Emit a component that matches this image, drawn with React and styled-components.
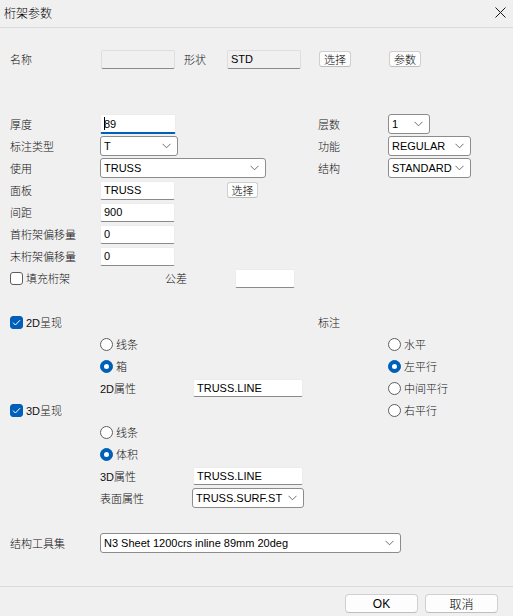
import React from "react";
import styled, { createGlobalStyle } from "styled-components";

const GlobalStyle = createGlobalStyle`
  html, body { margin: 0; padding: 0; background: #f0f0f0; }
  body {
    font-family: "Liberation Sans", "Noto Sans CJK SC", sans-serif;
    font-size: 11px;
    font-weight: 300;
    color: #1a1a1a;
  }
  * { box-sizing: border-box; }
`;

const Window = styled.div`
  width: 513px;
  height: 616px;
  display: flex;
  flex-direction: column;
  background: #f0f0f0;
`;

const TitleBar = styled.div`
  height: 28px;
  flex: none;
  display: flex;
  align-items: center;
  justify-content: space-between;
  padding: 0 7px 2px 4px;
  border-bottom: 1px solid #dadada;
`;

const Title = styled.div`
  font-size: 12px;
  color: #000;
`;

const Body = styled.div`
  flex: 1;
  padding-left: 10px;
`;

const Section = styled.div`
  margin-top: ${(p) => p.$mt || 0}px;
  display: flex;
`;

const Column = styled.div`
  width: ${(p) => (p.$w ? `${p.$w}px` : "auto")};
  display: flex;
  flex-direction: column;
`;

const Row = styled.div`
  height: 22px;
  display: flex;
  align-items: center;
  padding-left: ${(p) => p.$indent || 0}px;
`;

const Label = styled.span`
  width: ${(p) => (p.$w ? `${p.$w}px` : "auto")};
  margin-left: ${(p) => p.$ml || 0}px;
  flex: none;
  white-space: nowrap;
  color: #111;
`;

const TextBox = styled.div`
  position: relative;
  width: ${(p) => p.$w}px;
  height: ${(p) => p.$h || 19}px;
  margin-left: ${(p) => p.$ml || 0}px;
  flex: none;
  display: flex;
  align-items: center;
  padding-left: 3px;
  background: ${(p) => (p.$gray ? "#f0f0f0" : "#ffffff")};
  border: 1px solid ${(p) => (p.$gray ? "#dedede" : "#ececec")};
  border-bottom: ${(p) => (p.$focus ? "2px solid #005fb8" : "1px solid #8a8a8a")};
  border-radius: 2px;
  color: #000;
  white-space: nowrap;
`;

const Caret = styled.span`
  display: inline-block;
  width: 1px;
  height: 13px;
  background: #000;
  margin-right: -1px;
`;

const SelectBox = styled.div`
  width: ${(p) => p.$w}px;
  height: 20px;
  flex: none;
  display: flex;
  align-items: center;
  justify-content: space-between;
  padding: 0 6px 0 3px;
  background: #ffffff;
  border: 1px solid #8c8c8c;
  border-radius: 3px;
  color: #000;
  white-space: nowrap;
`;

const SmallButton = styled.div`
  width: ${(p) => p.$w || 32}px;
  height: 16px;
  margin-left: ${(p) => p.$ml || 0}px;
  flex: none;
  display: flex;
  align-items: center;
  justify-content: center;
  background: #fdfdfd;
  border: 1px solid #cfcfcf;
  border-bottom-color: #bdbdbd;
  border-radius: 3px;
  font-size: 11px;
  color: #000;
`;

const Box = styled.span`
  width: 13px;
  height: 13px;
  flex: none;
  margin-right: 3px;
  border-radius: 3px;
  display: flex;
  align-items: center;
  justify-content: center;
  background: ${(p) => (p.$checked ? "#005fb8" : "#ffffff")};
  border: 1px solid ${(p) => (p.$checked ? "#005fb8" : "#5e5e5e")};
`;

const RadioDot = styled.span`
  width: 13px;
  height: 13px;
  flex: none;
  margin-right: 3px;
  border-radius: 50%;
  display: flex;
  align-items: center;
  justify-content: center;
  background: ${(p) => (p.$checked ? "#005fb8" : "#ffffff")};
  border: 1px solid ${(p) => (p.$checked ? "#005fb8" : "#5e5e5e")};
  &::after {
    content: "";
    display: ${(p) => (p.$checked ? "block" : "none")};
    width: 5px;
    height: 5px;
    border-radius: 50%;
    background: #ffffff;
  }
`;

const Footer = styled.div`
  height: 30px;
  flex: none;
  border-top: 1px solid #dadada;
  display: flex;
  justify-content: flex-end;
  gap: 7px;
  padding: 7px 15px 0 0;
`;

const DialogButton = styled.div`
  width: 73px;
  height: 19px;
  display: flex;
  align-items: center;
  justify-content: center;
  background: #fdfdfd;
  border: 1px solid #d0d0d0;
  border-bottom-color: #bfbfbf;
  border-radius: 4px;
  font-size: 12px;
  color: #000;
`;

const Chevron = () => (
  <svg width="9" height="6" viewBox="0 0 9 6">
    <polyline points="0.5,0.8 4.5,4.8 8.5,0.8" fill="none" stroke="#5f5f5f" strokeWidth="0.9" />
  </svg>
);

const CloseIcon = () => (
  <svg width="11" height="11" viewBox="0 0 11 11">
    <path d="M0.5 0.5 L10.5 10.5 M10.5 0.5 L0.5 10.5" stroke="#1a1a1a" strokeWidth="1" />
  </svg>
);

const CheckMark = () => (
  <svg width="9" height="7" viewBox="0 0 9 7">
    <polyline points="1,3.6 3.4,6 8,1.2" fill="none" stroke="#ffffff" strokeWidth="1" />
  </svg>
);

const Select = ({ w, children }) => (
  <SelectBox $w={w}>
    <span>{children}</span>
    <Chevron />
  </SelectBox>
);

const Check = ({ checked, children }) => (
  <Row>
    <Box $checked={checked}>{checked && <CheckMark />}</Box>
    <Label>{children}</Label>
  </Row>
);

const Radio = ({ checked, indent, children }) => (
  <Row $indent={indent}>
    <RadioDot $checked={checked} />
    <Label>{children}</Label>
  </Row>
);

export default function App() {
  return (
    <Window>
      <GlobalStyle />
      <TitleBar>
        <Title>桁架参数</Title>
        <CloseIcon />
      </TitleBar>
      <Body>
        <Section $mt={20}>
          <Row>
            <Label $w={91}>名称</Label>
            <TextBox $w={74} $gray />
            <Label $w={43} $ml={9}>形状</Label>
            <TextBox $w={74} $gray>STD</TextBox>
            <SmallButton $ml={18}>选择</SmallButton>
            <SmallButton $ml={38}>参数</SmallButton>
          </Row>
        </Section>

        <Section $mt={43}>
          <Column $w={308}>
            <Row>
              <Label $w={90}>厚度</Label>
              <TextBox $w={76} $h={20} $focus><Caret />89</TextBox>
            </Row>
            <Row>
              <Label $w={90}>标注类型</Label>
              <Select w={78}>T</Select>
            </Row>
            <Row>
              <Label $w={90}>使用</Label>
              <Select w={166}>TRUSS</Select>
            </Row>
            <Row>
              <Label $w={90}>面板</Label>
              <TextBox $w={75}>TRUSS</TextBox>
              <SmallButton $ml={52} $w={31}>选择</SmallButton>
            </Row>
            <Row>
              <Label $w={90}>间距</Label>
              <TextBox $w={75}>900</TextBox>
            </Row>
            <Row>
              <Label $w={90}>首桁架偏移量</Label>
              <TextBox $w={75}>0</TextBox>
            </Row>
            <Row>
              <Label $w={90}>末桁架偏移量</Label>
              <TextBox $w={75}>0</TextBox>
            </Row>
            <Row>
              <Box />
              <Label $w={139}>填充桁架</Label>
              <Label $w={70}>公差</Label>
              <TextBox $w={60} />
            </Row>
          </Column>
          <Column>
            <Row>
              <Label $w={70}>层数</Label>
              <Select w={42}>1</Select>
            </Row>
            <Row>
              <Label $w={70}>功能</Label>
              <Select w={83}>REGULAR</Select>
            </Row>
            <Row>
              <Label $w={70}>结构</Label>
              <Select w={83}>STANDARD</Select>
            </Row>
          </Column>
        </Section>

        <Section $mt={22}>
          <Column $w={308}>
            <Check checked>2D呈现</Check>
            <Radio indent={90}>线条</Radio>
            <Radio indent={90} checked>箱</Radio>
            <Row $indent={90}>
              <Label $w={93}>2D属性</Label>
              <TextBox $w={110} $h={18}>TRUSS.LINE</TextBox>
            </Row>
            <Check checked>3D呈现</Check>
            <Radio indent={90}>线条</Radio>
            <Radio indent={90} checked>体积</Radio>
            <Row $indent={90}>
              <Label $w={93}>3D属性</Label>
              <TextBox $w={110} $h={18}>TRUSS.LINE</TextBox>
            </Row>
            <Row $indent={90}>
              <Label $w={92}>表面属性</Label>
              <Select w={112}>TRUSS.SURF.ST</Select>
            </Row>
          </Column>
          <Column>
            <Row>
              <Label>标注</Label>
            </Row>
            <Radio indent={70}>水平</Radio>
            <Radio indent={70} checked>左平行</Radio>
            <Radio indent={70}>中间平行</Radio>
            <Radio indent={70}>右平行</Radio>
          </Column>
        </Section>

        <Section $mt={23}>
          <Row>
            <Label $w={90}>结构工具集</Label>
            <Select w={301}>N3 Sheet 1200crs inline 89mm 20deg</Select>
          </Row>
        </Section>
      </Body>
      <Footer>
        <DialogButton>OK</DialogButton>
        <DialogButton>取消</DialogButton>
      </Footer>
    </Window>
  );
}
